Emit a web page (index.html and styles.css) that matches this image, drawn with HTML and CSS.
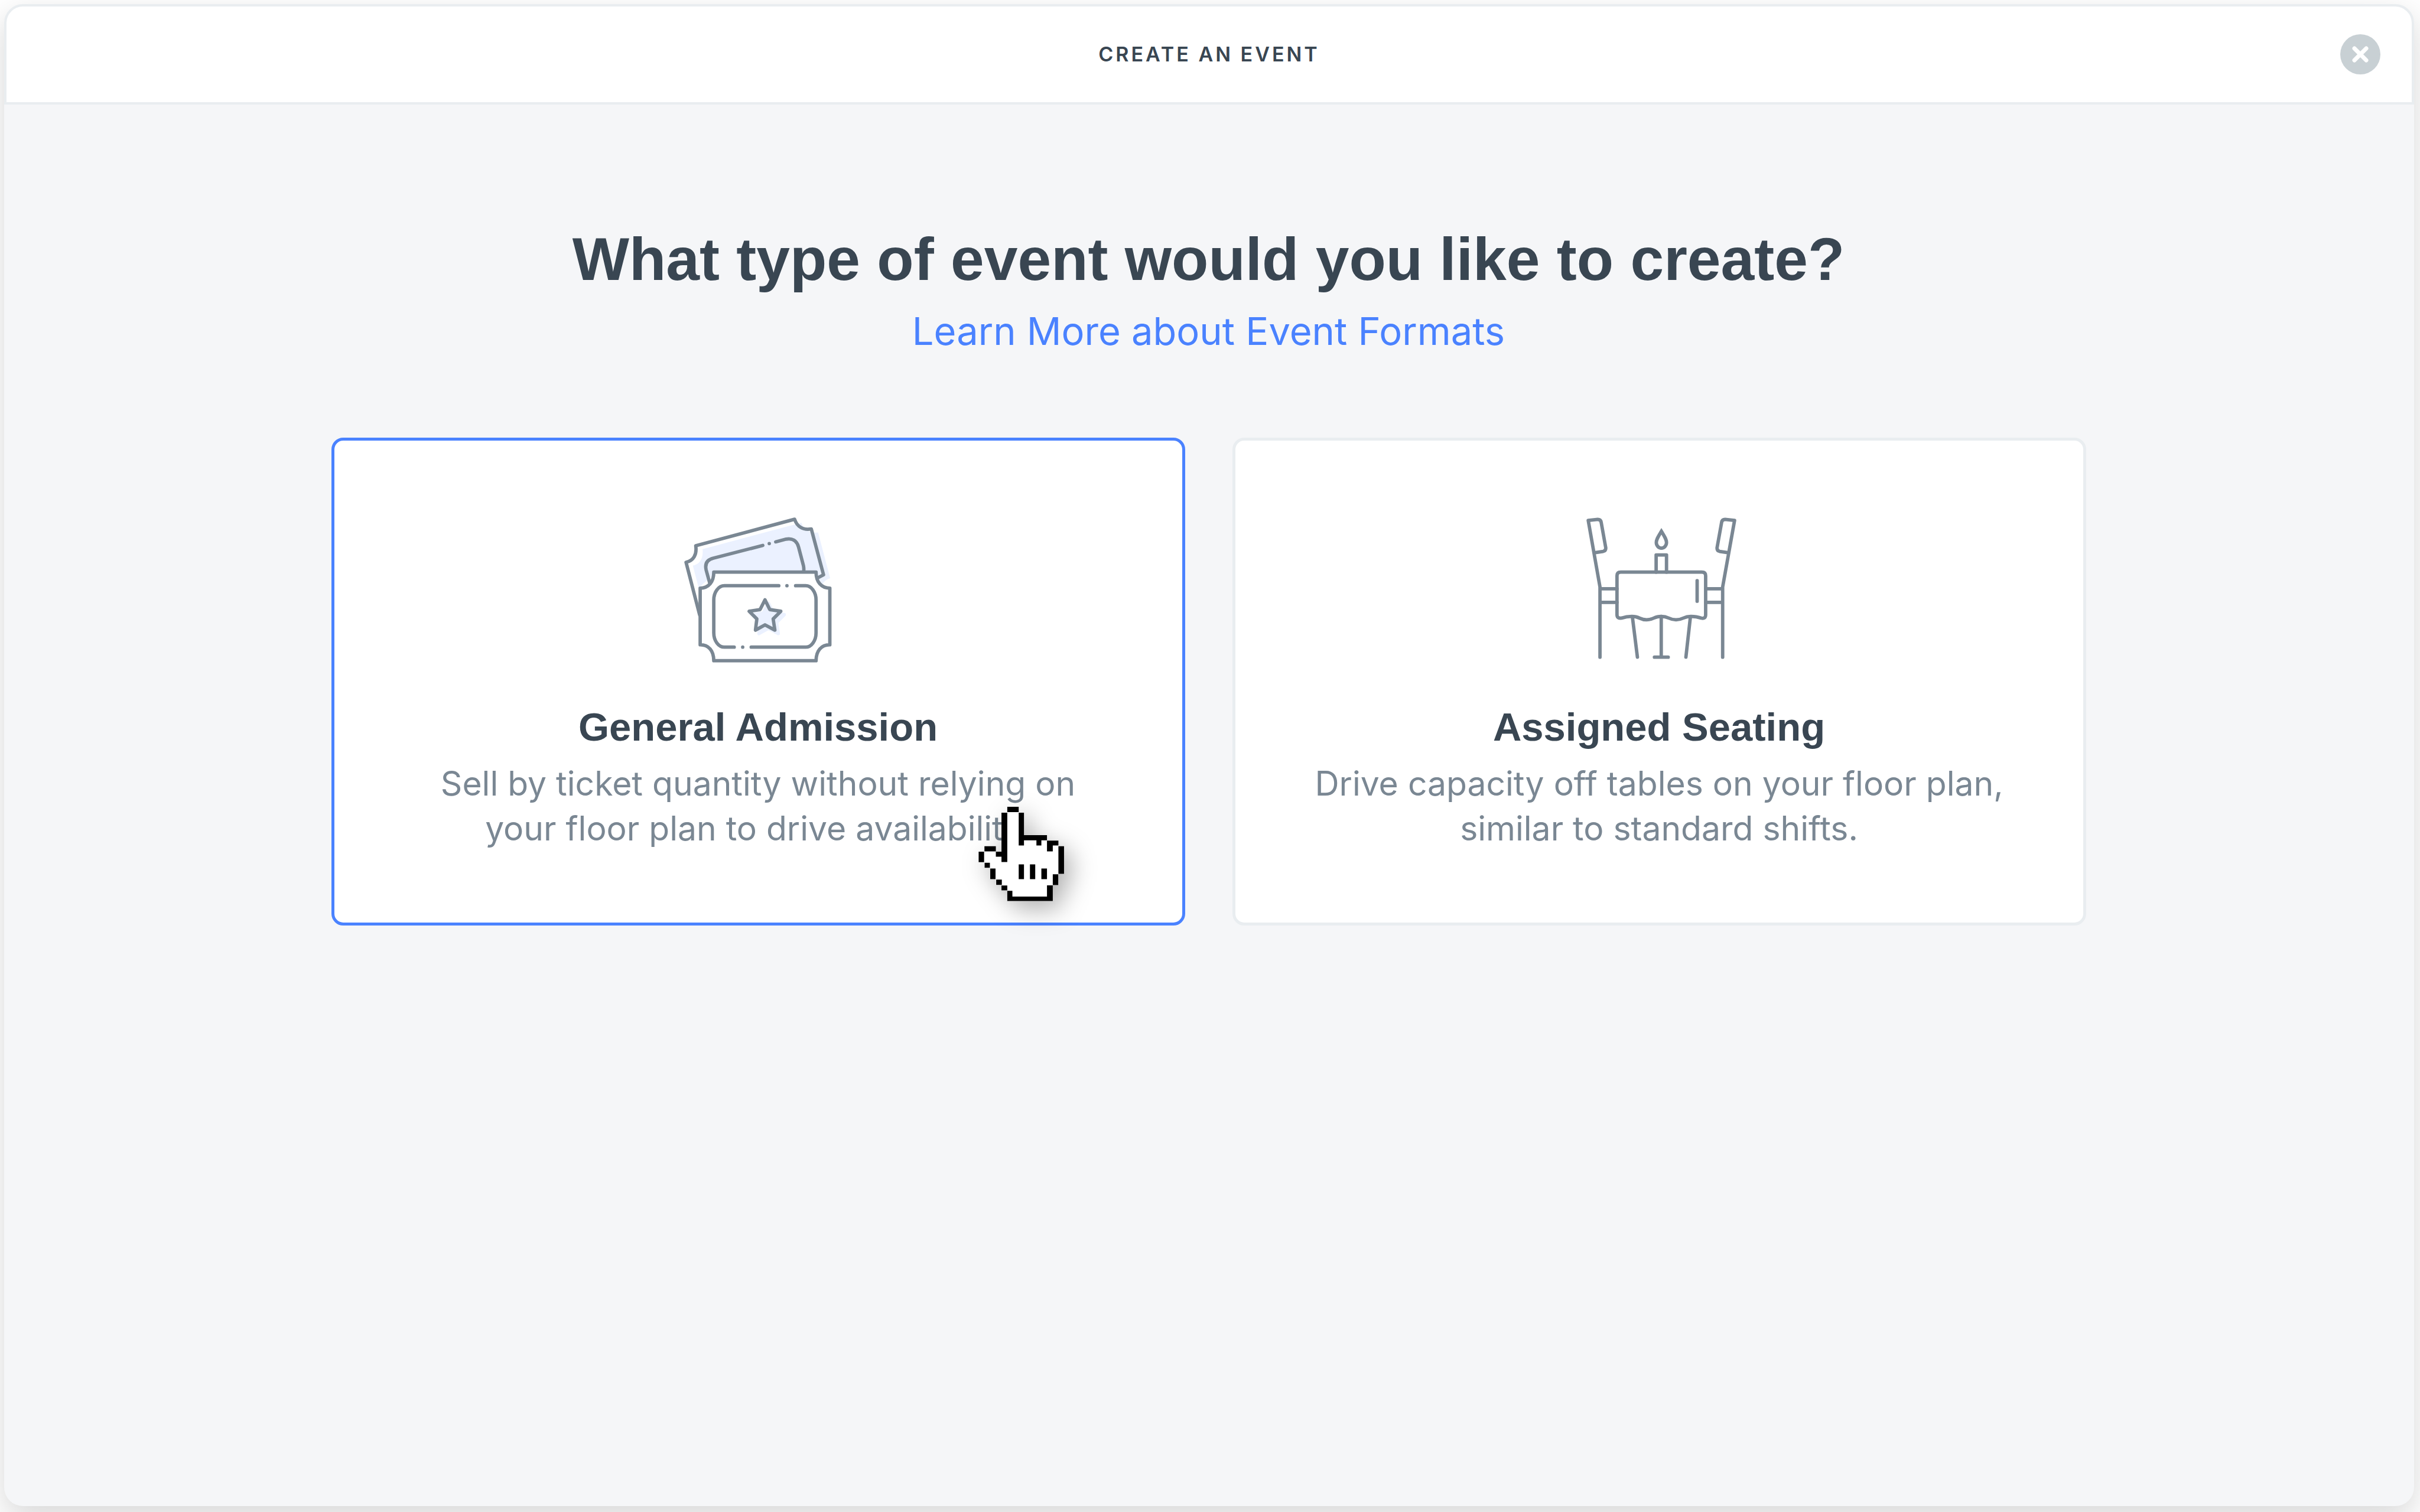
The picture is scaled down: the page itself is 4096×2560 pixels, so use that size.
FILE: index.html
```html
<!DOCTYPE html>
<html lang="en">
<head>
<meta charset="utf-8">
<title>Create an Event</title>
<link rel="stylesheet" href="styles.css">
</head>
<body>
<div class="modal" role="dialog" aria-labelledby="modal-title">
  <header class="modal-header">
    <h1 class="modal-title" id="modal-title">CREATE AN EVENT</h1>
    <button class="close" type="button" aria-label="Close">
      <svg class="close-icon" viewBox="0 0 28 28" aria-hidden="true"><path d="M4 4L24 24M24 4L4 24"/></svg>
    </button>
  </header>
  <main class="modal-body">
    <h2 class="question">What type of event would you like to create?</h2>
    <a class="learn-more" href="#formats">Learn More about Event Formats</a>
    <div class="choices">
      <button class="choice choice-selected" type="button">
        <svg class="choice-icon" viewBox="-10 60 1000 870" aria-hidden="true">
          <path class="tint" d="M107 350C150 342 170 305 164 253L745 97C760 140 795 160 843 155L914 424Q880 435 868 460L831 400L230 400L141 480Z"/>
          <path d="M147 640L67 330C110 322 132 285 124 233L705 77C720 122 755 142 803 134L875 404L840 422"/>
          <path d="M207 455L185 375C176 335 195 314 228 306L518 231M594 210L655 194C690 187 718 202 728 240L757 350Q761 370 758 385M556 220V220"/>
          <path class="paper" d="M230 388H831C831 445 862 482 912 482V815C862 815 831 850 831 909H230C230 850 200 815 150 815V482C200 482 230 445 230 388Z"/>
          <path d="M612 468H293C258 468 230 505 230 552V745C230 792 258 829 293 829H350M450 829H770C803 829 831 792 831 745V552C831 505 803 468 770 468H711M660 468V468M400 829V829"/>
          <path class="tint tint-star" d="M551 571L579 628L644 638L599 683L609 749L551 718L495 749L503 683L458 638L522 628Z"/>
          <path d="M531 551L559 608L624 618L579 663L589 729L531 698L475 729L483 663L438 618L502 608Z"/>
        </svg>
        <span class="choice-title">General Admission</span>
        <span class="choice-text">Sell by ticket quantity without relying on your floor plan to drive availability.</span>
        <svg class="pointer" viewBox="0 0 780 780" aria-hidden="true">
          <path class="hand" d="M270 87H337V121H368V253H503V285H570V318H603V480H569V546H537V640H270V578H236V547H203V513H170V447H136V413H102V350H136V318H203V350H236V121H270Z"/>
          <path class="outline" d="M270 87H337V118H270ZM236 121H270V411H236V380H203V350H236ZM337 121H368V253H503V283H470V314H441V283H368V314H337ZM503 285H570V314H537V348H503ZM570 318H603V480H570ZM537 483H569V546H537ZM503 548H537V640H270V580H300V614H503ZM136 318H203V348H136ZM102 350H134V412H102ZM137 415H168V445H137ZM170 449H201V511H170ZM205 514H238V545H205ZM236 549H270V577H236ZM337 425H368V511H337ZM403 425H434V511H403ZM470 449H503V511H470Z"/>
        </svg>
      </button>
      <button class="choice" type="button">
        <svg class="choice-icon" viewBox="0 60 1000 870" aria-hidden="true">
          <path d="M153 888V475L84 84L140 78Q157 78 160 95L187 245Q188 262 172 266L120 274M153 486H253M153 566H253"/>
          <path d="M874 888V475L944 84L888 78Q871 78 868 95L841 245Q840 262 856 266L908 274M874 486H774M874 566H774"/>
          <path d="M253 410Q253 388 275 388H752Q774 388 774 410V638Q774 664 748 658Q720 648 687 648C640 648 645 668 600 668S560 648 513 648S472 668 427 668S390 648 340 648Q308 648 280 658Q253 662 253 638Z"/>
          <path d="M483 388V287H544V388M724 438V559M344 655L373 888M684 655L658 888M513 648V888M473 888H554"/>
          <path class="flame" d="M514 148C495 180 484 195 484 214A30 33 0 0 0 544 214C544 195 533 180 514 148Z"/>
        </svg>
        <span class="choice-title">Assigned Seating</span>
        <span class="choice-text">Drive capacity off tables on your floor plan, similar to standard shifts.</span>
      </button>
    </div>
  </main>
</div>
</body>
</html>
```
FILE: styles.css
```css
* { box-sizing: border-box; }

body {
  margin: 0;
  padding: 7px 10px 10px 7px;
  min-height: 100vh;
  display: flex;
  background: #fff;
  color: #394652;
  font-family: Inter, "Liberation Sans", sans-serif;
}

.modal {
  flex: 1;
  min-width: 0;
  display: flex;
  flex-direction: column;
  border-radius: 32px;
  background: #f5f6f8;
  box-shadow: 0 20px 56px rgba(0, 0, 0, .16);
}

.modal-header {
  display: grid;
  grid-template-columns: 1fr auto 1fr;
  align-items: center;
  height: 170px;
  padding: 0 53px;
  border: 4px solid #e9edf0;
  border-radius: 32px 32px 0 0;
  background: #fff;
}

.modal-title {
  grid-column: 2;
  margin: 0;
  font-size: 34px;
  line-height: 40px;
  font-weight: 600;
  letter-spacing: 4px;
}

.close {
  justify-self: end;
  display: grid;
  place-items: center;
  width: 68px;
  height: 68px;
  padding: 0;
  border: 0;
  border-radius: 50%;
  background: #c8d0d4;
}

.close-icon {
  width: 28px;
  height: 28px;
  fill: none;
  stroke: #fff;
  stroke-width: 7;
  stroke-linecap: round;
}

.modal-body {
  display: flex;
  flex-direction: column;
  align-items: center;
  padding: 202px 82px 80px 80px;
}

.question {
  margin: 0 0 22px;
  font-family: "Liberation Sans", Arial, sans-serif;
  font-size: 102px;
  line-height: 120px;
  font-weight: 700;
  text-align: center;
}

.learn-more {
  margin-bottom: 140px;
  color: #4a82ff;
  font-size: 65px;
  line-height: 80px;
  text-decoration: none;
}

.choices {
  display: grid;
  grid-template-columns: 1fr 1fr;
  gap: 80px;
  width: 100%;
  max-width: 2970px;
}

.choice {
  position: relative;
  display: flex;
  flex-direction: column;
  align-items: center;
  padding: 128px 80px 121px;
  border: 5px solid #e9edf0;
  border-radius: 20px;
  background: #fff;
  color: inherit;
  font: inherit;
  text-align: center;
}

.choice-selected { border-color: #4a82ff; }

.choice-icon {
  width: 288px;
  height: 251px;
  margin-bottom: 66px;
  fill: none;
  stroke: #7a8793;
  stroke-width: 20;
  stroke-linecap: round;
  stroke-linejoin: round;
}

.choice-icon .tint { fill: #ebf1ff; stroke: none; }
.choice-icon .tint-star { stroke: #ebf1ff; }
.choice-icon .paper { fill: #fff; }
.choice-icon .flame { stroke-linejoin: miter; }

.choice-title {
  margin-bottom: 18px;
  font-family: "Liberation Sans", Arial, sans-serif;
  font-size: 67px;
  line-height: 80px;
  font-weight: 700;
}

.choice-text {
  max-width: 1180px;
  color: #7a8793;
  font-size: 57px;
  line-height: 76px;
}

.pointer {
  position: absolute;
  left: 1061px;
  top: 595px;
  width: 225px;
  height: 225px;
  overflow: visible;
  filter: drop-shadow(12px 14px 20px rgba(0, 0, 0, .3));
}

.pointer .hand { fill: #fff; }
.pointer .outline { fill: #000; }
```
